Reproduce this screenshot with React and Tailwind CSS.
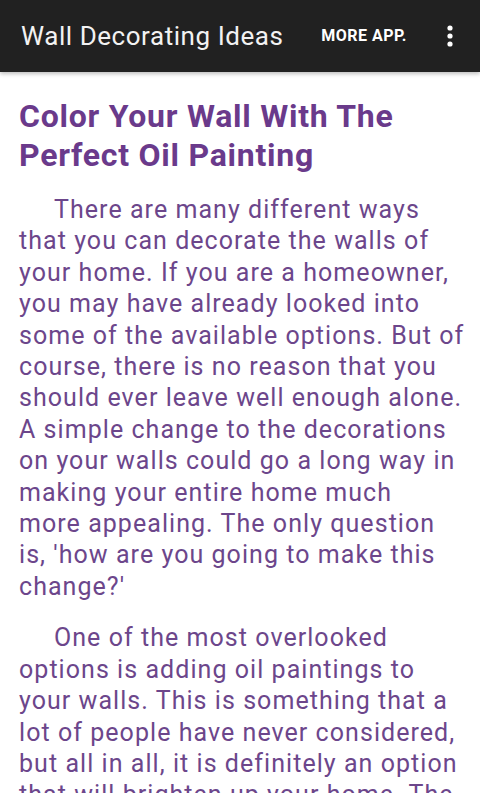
const para1 = [
  'There are many different ways',
  'that you can decorate the walls of',
  'your home. If you are a homeowner,',
  'you may have already looked into',
  'some of the available options. But of',
  'course, there is no reason that you',
  'should ever leave well enough alone.',
  'A simple change to the decorations',
  'on your walls could go a long way in',
  'making your entire home much',
  'more appealing. The only question',
  "is, 'how are you going to make this",
  "change?'",
]

const para2 = [
  'One of the most overlooked',
  'options is adding oil paintings to',
  'your walls. This is something that a',
  'lot of people have never considered,',
  'but all in all, it is definitely an option',
  'that will brighten up your home. The',
]

function Para({ lines, gap }) {
  return (
    <p className={`${gap} text-[25px] leading-[31.4px] text-[#6c468b] tracking-[1.05px] whitespace-nowrap`}>
      {lines.map((l, i) => (
        <span key={i} className={i === 0 ? 'block pl-[35px]' : 'block'}>{l}</span>
      ))}
    </p>
  )
}

export default function App() {
  return (
    <div className="w-[480px] h-[800px] bg-white overflow-hidden flex flex-col" style={{ fontFamily: 'Roboto, "Liberation Sans", sans-serif' }}>
      <header className="h-[72px] shrink-0 bg-[#212121] flex items-center pl-[21px] pr-[26px] relative z-10 shadow-[0_2px_4px_rgba(0,0,0,0.25)]">
        <h1 className="text-[26px] text-[#f2f2f2] flex-1 tracking-[0.55px]">Wall Decorating Ideas</h1>
        <span className="text-[16px] font-bold text-white mr-[39px] tracking-[0.5px]">MORE APP.</span>
        <svg width="8" height="24" viewBox="0 0 8 24" className="fill-white">
          <circle cx="4" cy="4" r="2.6" />
          <circle cx="4" cy="12" r="2.6" />
          <circle cx="4" cy="20" r="2.6" />
        </svg>
      </header>
      <main className="h-[721px] overflow-hidden px-[19px] pt-[25px]">
        <h2 className="text-[32px] leading-[39px] font-bold text-[#6a3a8b] tracking-[0.75px]">
          Color Your Wall With The<br />Perfect Oil Painting
        </h2>
        <Para lines={para1} gap="mt-[19px]" />
        <Para lines={para2} gap="mt-[20px]" />
      </main>
    </div>
  )
}
